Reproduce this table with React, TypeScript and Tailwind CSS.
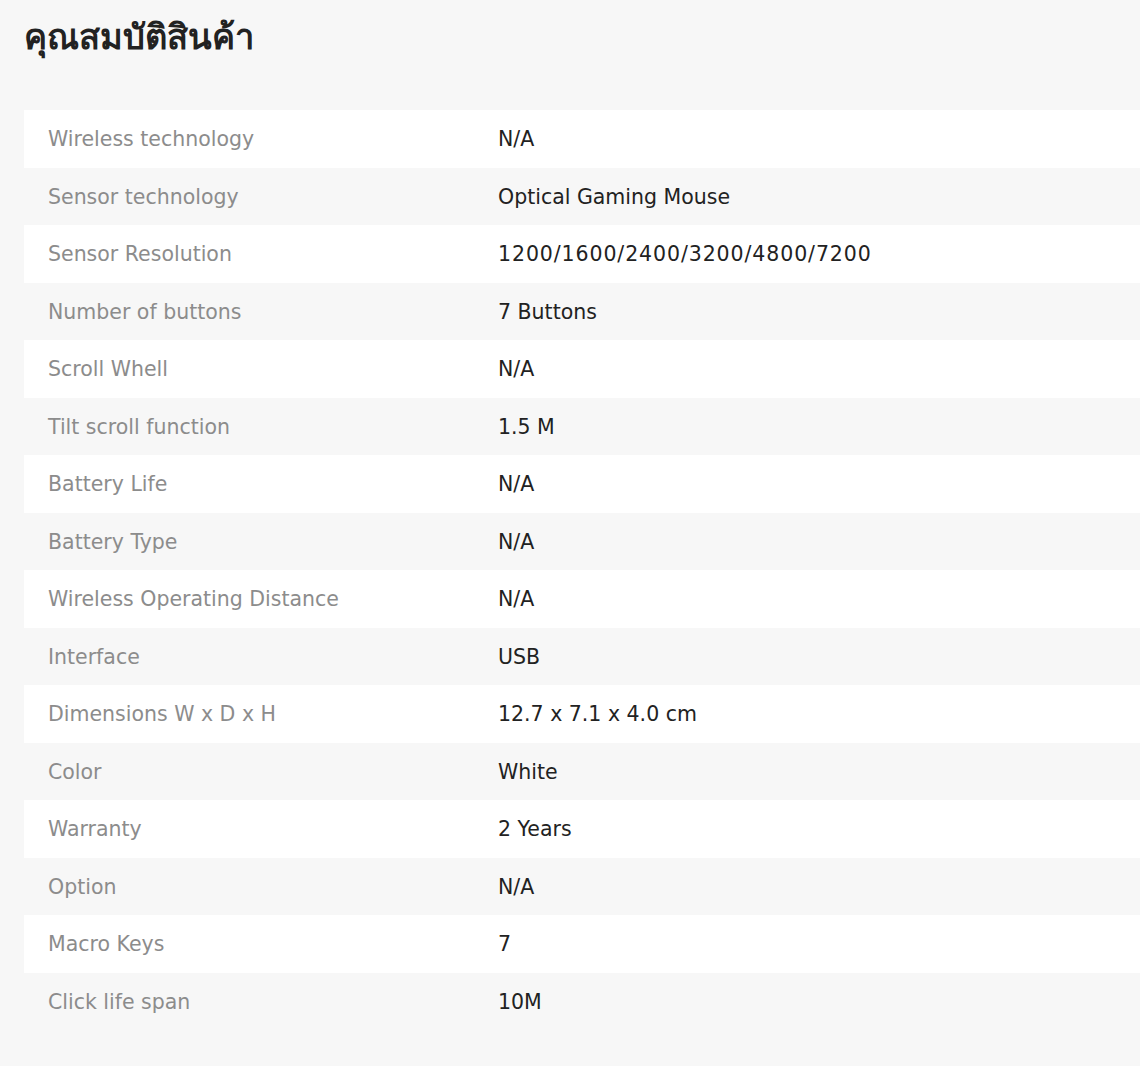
import React from "react";

const rows: [string, string][] = [
  ["Wireless technology", "N/A"],
  ["Sensor technology", "Optical Gaming Mouse"],
  ["Sensor Resolution", "1200/1600/2400/3200/4800/7200"],
  ["Number of buttons", "7 Buttons"],
  ["Scroll Whell", "N/A"],
  ["Tilt scroll function", "1.5 M"],
  ["Battery Life", "N/A"],
  ["Battery Type", "N/A"],
  ["Wireless Operating Distance", "N/A"],
  ["Interface", "USB"],
  ["Dimensions W x D x H", "12.7 x 7.1 x 4.0 cm"],
  ["Color", "White"],
  ["Warranty", "2 Years"],
  ["Option", "N/A"],
  ["Macro Keys", "7"],
  ["Click life span", "10M"],
];

export default function App() {
  return (
    <div
      className="min-h-[1066px] w-[1140px] bg-[#f7f7f7] pl-6"
      style={{ fontFamily: '"DejaVu Sans", "Noto Sans", sans-serif' }}
    >
      <h1 className="pt-[13px] text-[34.5px] font-bold leading-[48px] text-[#222222]">
        คุณสมบัติสินค้า
      </h1>
      <div className="mt-[49px] flex flex-col">
        {rows.map(([k, v], i) => (
          <div
            key={k}
            className={`flex h-[57.5px] items-center pt-[2px] text-[20.5px] ${i % 2 === 0 ? "bg-white" : "bg-[#f7f7f7]"}`}
          >
            <div className="w-[474px] shrink-0 pl-6 text-[#8c8c8c]">{k}</div>
            <div className={`text-[#222222] ${v.includes("/") && v.length > 5 ? "tracking-[0.9px]" : ""}`}>{v}</div>
          </div>
        ))}
      </div>
    </div>
  );
}
